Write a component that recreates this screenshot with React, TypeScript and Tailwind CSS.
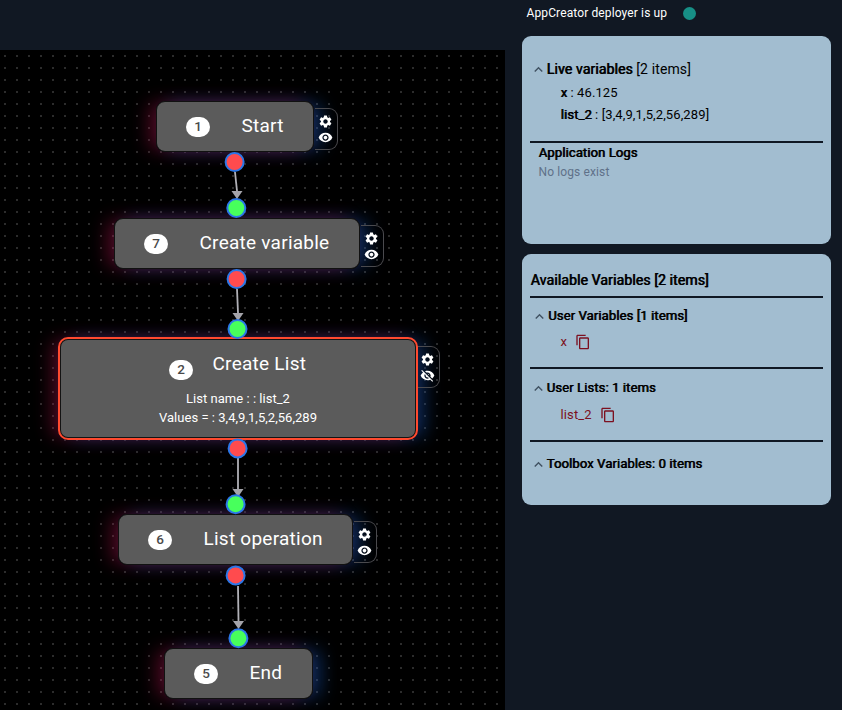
import React from "react";
import { MdContentCopy, MdExpandLess, MdSettings, MdVisibility, MdVisibilityOff } from "react-icons/md";

type FlowNode = {
  id: number;
  title: string;
  box: string;
  badge: string;
  heading: string;
  details?: string[];
  selected?: boolean;
  tools?: string;
  hidden?: boolean;
};

const nodes: FlowNode[] = [
  { id: 1, title: "Start", box: "left-[156px] top-[51px] w-[158px] h-[51px]", badge: "left-[29px] top-[14.5px]", heading: "left-[84.5px] top-[10px]", tools: "left-[315px] top-[58px]" },
  { id: 7, title: "Create variable", box: "left-[114px] top-[168px] w-[246px] h-[51px]", badge: "left-[29px] top-[14.5px]", heading: "left-[84.5px] top-[10px]", tools: "left-[361px] top-[175px]" },
  { id: 2, title: "Create List", box: "left-[59px] top-[288px] w-[358px] h-[101px]", badge: "left-[108px] top-[19.5px]", heading: "left-[151.5px] top-[10px]", details: ["List name : : list_2", "Values = : 3,4,9,1,5,2,56,289"], selected: true, hidden: true, tools: "left-[417px] top-[296px]" },
  { id: 6, title: "List operation", box: "left-[118px] top-[464px] w-[235px] h-[51px]", badge: "left-[29px] top-[14.5px]", heading: "left-[84.5px] top-[10px]", tools: "left-[354px] top-[471px]" },
  { id: 5, title: "End", box: "left-[164px] top-[598px] w-[149px] h-[51px]", badge: "left-[29px] top-[14.5px]", heading: "left-[84.5px] top-[10px]" },
];

const edges = [
  { x1: 235, y1: 122, x2: 237, y2: 141 },
  { x1: 237, y1: 239, x2: 238, y2: 263 },
  { x1: 238, y1: 408, x2: 238, y2: 439 },
  { x1: 238, y1: 536, x2: 238.5, y2: 571 },
];

const handles = [
  { x: 234.6, y: 112, out: true },
  { x: 236.3, y: 158, out: false },
  { x: 236.6, y: 229, out: true },
  { x: 237.5, y: 279, out: false },
  { x: 237.6, y: 398.4, out: true },
  { x: 235.6, y: 454.2, out: false },
  { x: 235.6, y: 525.4, out: true },
  { x: 238.4, y: 588.3, out: false },
];

function NodeView({ node }: { node: FlowNode }) {
  return (
    <>
      <div className={`absolute rounded-[9px] shadow-[-9px_0_18px_-2px_rgba(170,20,70,0.45),9px_0_18px_-2px_rgba(25,90,185,0.5)] ${node.box}`} />
      {node.tools && (
        <div className={`absolute flex h-[42px] w-[23px] flex-col items-center gap-px rounded-r-[9px] border border-l-0 border-[#4a4a4e] pt-[5px] pr-px text-white ${node.tools}`}>
          <MdSettings size={15} />
          {node.hidden ? <MdVisibilityOff size={15} /> : <MdVisibility size={15} />}
        </div>
      )}
      <div
        className={`absolute rounded-[9px] border bg-[#5b5b5b] text-white ${
          node.selected ? "border-2 border-[#141414] outline-2 -outline-offset-1 outline-[#ff4a2f]" : "border-[#111]"
        } ${node.box}`}
      >
        <div className={`absolute flex h-[20px] w-[24px] items-center justify-center rounded-full bg-white pb-px text-[13.5px] font-medium text-[#4a4a4a] ${node.badge}`}>{node.id}</div>
        <div className={`absolute text-[19px] leading-[28px] tracking-[0.25px] whitespace-nowrap ${node.heading}`}>{node.title}</div>
        {node.details && (
          <div className="pt-[49px] text-center text-[13px] leading-[19px] tracking-[0.03px]">
            {node.details.map((d) => (
              <div key={d}>{d}</div>
            ))}
          </div>
        )}
      </div>
    </>
  );
}

function Heading({ children, className }: { children: React.ReactNode; className: string }) {
  return (
    <div className={`flex h-[20px] items-center leading-[20px] text-black ${className}`}>
      <MdExpandLess size={17} className="-ml-[0.5px] text-[#405262]" />
      <div>{children}</div>
    </div>
  );
}

function Bold({ children }: { children: React.ReactNode }) {
  return <span className="[text-shadow:0.7px_0_0_currentColor]">{children}</span>;
}

function Rule() {
  return <div className="h-[2px] bg-[#0f1723]" />;
}

export default function App() {
  return (
    <div className="flex h-[710px] w-[842px] overflow-hidden bg-[#111823] font-['Roboto',sans-serif]">
      <main className="relative mt-[50px] h-[660px] w-[505px] shrink-0 overflow-hidden bg-black">
        <svg className="absolute inset-0" width="505" height="660">
          <defs>
            <pattern id="dots" x="4" y="5" width="12" height="12" patternUnits="userSpaceOnUse">
              <rect width="2" height="2" fill="#2c2c2c" />
            </pattern>
          </defs>
          <rect width="505" height="660" fill="url(#dots)" />
        </svg>
        {nodes.map((n) => (
          <NodeView key={n.id} node={n} />
        ))}
        <svg className="absolute inset-0" width="505" height="660">
          {edges.map((e) => (
            <g key={e.y1}>
              <line x1={e.x1} y1={e.y1} x2={e.x2} y2={e.y2} stroke="#b1b1b7" strokeWidth="1.8" />
              <path d={`M${e.x2 - 5.5} ${e.y2}h11l-5.5 8z`} fill="#a4a4aa" />
            </g>
          ))}
          {handles.map((h) => (
            <circle key={h.y} cx={h.x} cy={h.y} r="9" fill={h.out ? "#ff4b4e" : "#47ff5c"} stroke="#2b77e8" strokeWidth="2" />
          ))}
        </svg>
      </main>

      <aside className="ml-[17px] flex w-[309px] flex-col tracking-[0.12px]">
        <div className="flex h-[36px] items-start pt-[3px] pl-[4.5px] text-[12px] leading-[20px] text-white">
          AppCreator deployer is up
          <span className="mt-[4px] ml-[15.5px] size-[13px] rounded-full bg-[#178f86]" />
        </div>

        <section className="h-[208px] rounded-[9px] bg-[#a2bdd0] px-[8px] pt-[23px] text-black">
          <Heading className="text-[14px]">
            <Bold>Live variables</Bold> [2 items]
          </Heading>
          <div className="pt-[3px] pl-[30.5px] text-[13px] leading-[22px]">
            <div><Bold>x</Bold> : 46.125</div>
            <div><Bold>list_2</Bold> : [3,4,9,1,5,2,56,289]</div>
          </div>
          <div className="h-[15px]" />
          <Rule />
          <div className="pl-[8.5px]">
            <div className="text-[13px] leading-[20px]"><Bold>Application Logs</Bold></div>
            <div className="text-[12px] leading-[18px] text-[#5f7189]">No logs exist</div>
          </div>
        </section>

        <section className="mt-[10px] h-[251px] rounded-[9px] bg-[#a2bdd0] px-[8px] pt-[16px] text-black">
          <div className="h-[26px] pl-[0.5px] text-[14px] leading-[20px]"><Bold>Available Variables [2 items]</Bold></div>
          <Rule />
          <Heading className="mt-[8px] pl-[1.5px] text-[13px]"><Bold>User Variables [1 items]</Bold></Heading>
          <div className="mt-[6px] flex h-[20px] items-center gap-[7.5px] pl-[30.5px] text-[13px] text-[#7c1020]">
            x <MdContentCopy size={16} />
          </div>
          <div className="h-[15px]" />
          <Rule />
          <Heading className="mt-[9px] text-[13px]"><Bold>User Lists: 1 items</Bold></Heading>
          <div className="mt-[7px] flex h-[20px] items-center gap-[8px] pl-[30.5px] text-[13px] text-[#7c1020]">
            list_2 <MdContentCopy size={16} />
          </div>
          <div className="h-[15px]" />
          <Rule />
          <Heading className="mt-[12px] text-[13px]"><Bold>Toolbox Variables: 0 items</Bold></Heading>
        </section>
      </aside>
    </div>
  );
}
